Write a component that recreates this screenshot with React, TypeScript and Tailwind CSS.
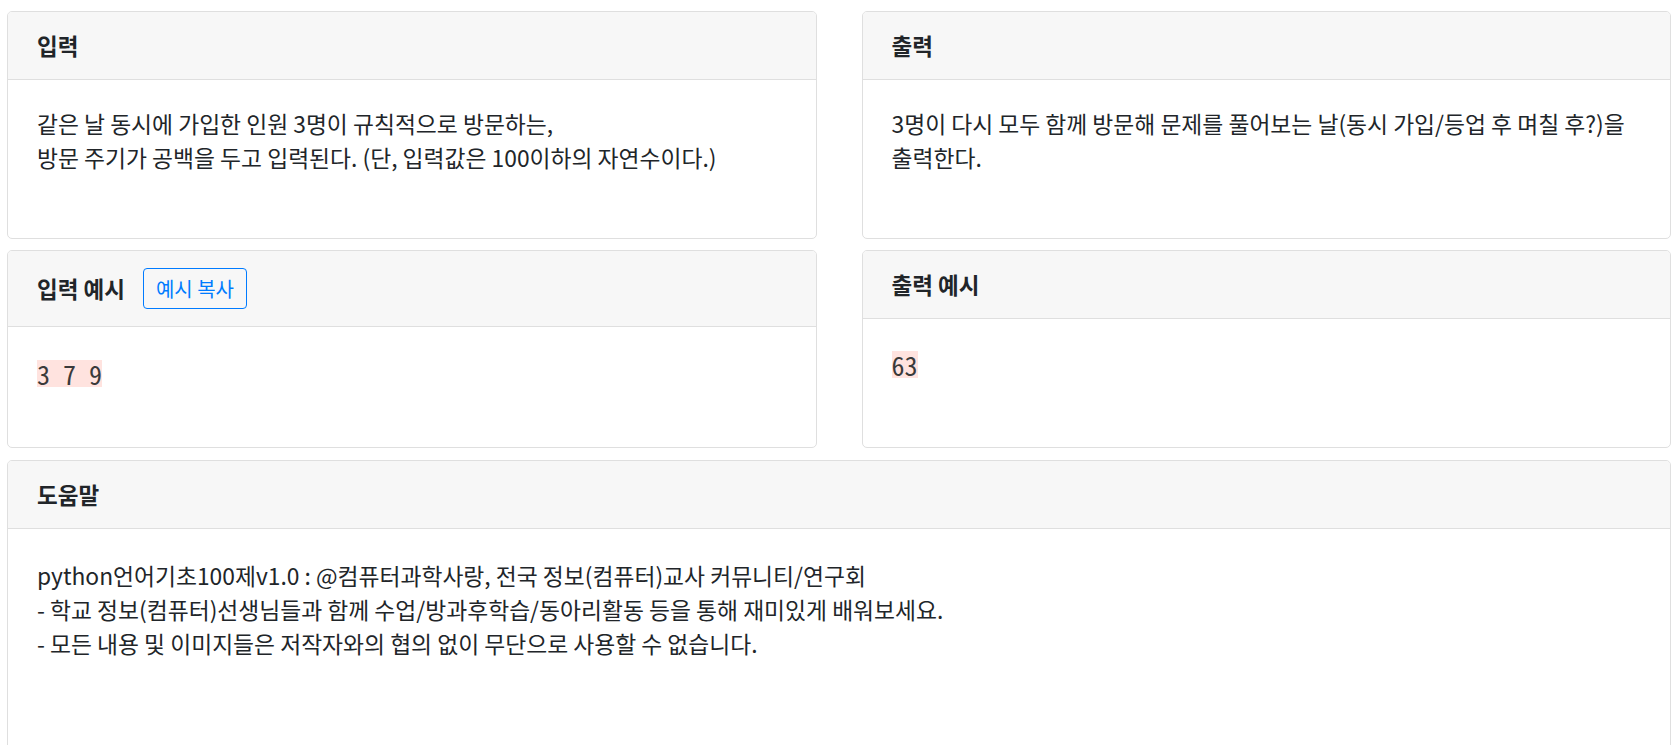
import React from "react";

function Card({
  title,
  extra,
  children,
  className,
  bodyClass,
}: {
  title: string;
  extra?: React.ReactNode;
  children: React.ReactNode;
  className?: string;
  bodyClass?: string;
}) {
  return (
    <div
      className={
        "flex flex-col overflow-hidden rounded-[5px] border border-[#dfdfdf] bg-white " +
        (className ?? "")
      }
    >
      <div className="flex items-center border-b border-[#dfdfdf] bg-[#f7f7f7] px-[29px] py-[17px]">
        <h5 className="text-[22.5px] font-bold leading-[33px] text-[#212529]">{title}</h5>
        {extra}
      </div>
      <div className={"px-[29px] text-[22.8px] leading-[33.75px] text-[#212529] " + (bodyClass ?? "pt-[27px]")}>
        {children}
      </div>
    </div>
  );
}

function Sample({ text }: { text: string }) {
  return (
    <span className="inline-block h-[27px] whitespace-pre bg-[#ffe3df] font-['Noto_Sans_Mono_CJK_KR','DejaVu_Sans_Mono',monospace] text-[26px] leading-[27px] text-[#3a3a3a]">
      {text}
    </span>
  );
}

export default function App() {
  return (
    <div className="min-h-screen bg-white px-[7px] pt-[11px] font-['Noto_Sans_CJK_KR','Noto_Sans',sans-serif]">
      <div className="grid grid-cols-2 grid-rows-[228px_198px] gap-x-[45px] gap-y-[11px]">
        <Card title="입력">
          <p className="whitespace-nowrap">
            같은 날 동시에 가입한 인원 3명이 규칙적으로 방문하는,
            <br />
            방문 주기가 공백을 두고 입력된다. (단, 입력값은 100이하의 자연수이다.)
          </p>
        </Card>
        <Card title="출력">
          <p className="whitespace-nowrap">
            3명이 다시 모두 함께 방문해 문제를 풀어보는 날(동시 가입/등업 후 며칠 후?)을
            <br />
            출력한다.
          </p>
        </Card>
        <Card
          title="입력 예시"
          bodyClass="pt-[32px]"
          extra={
            <button className="ml-[18px] h-[41px] rounded-[4px] border border-[#007bff] px-[12px] text-[20px] leading-[27px] text-[#007bff]">
              예시 복사
            </button>
          }
        >
          <Sample text="3 7 9" />
        </Card>
        <Card title="출력 예시" bodyClass="pt-[31px]">
          <Sample text="63" />
        </Card>
      </div>
      <div className="mt-[12px]">
        <Card title="도움말" className="h-[320px]" bodyClass="pt-[30px]">
          <p className="whitespace-nowrap">
            python언어기초100제v1.0 : @컴퓨터과학사랑, 전국 정보(컴퓨터)교사 커뮤니티/연구회
            <br />
            - 학교 정보(컴퓨터)선생님들과 함께 수업/방과후학습/동아리활동 등을 통해 재미있게 배워보세요.
            <br />
            - 모든 내용 및 이미지들은 저작자와의 협의 없이 무단으로 사용할 수 없습니다.
          </p>
        </Card>
      </div>
    </div>
  );
}
